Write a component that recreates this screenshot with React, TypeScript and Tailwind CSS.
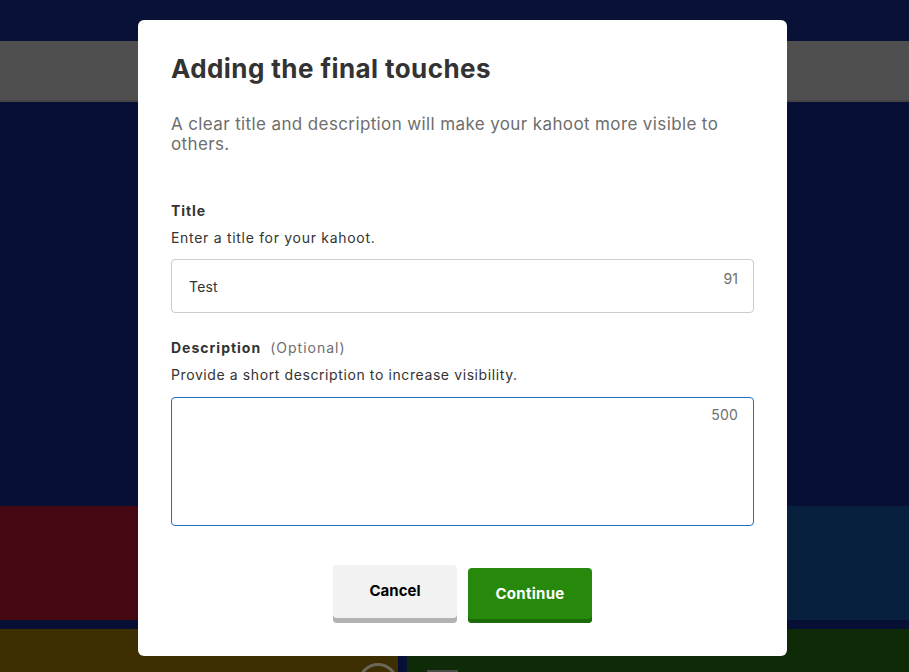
import React from "react";

export default function App() {
  const font = { fontFamily: "Inter, 'Noto Sans', sans-serif" };
  return (
    <div className="relative w-[909px] h-[672px] overflow-hidden bg-[#080f35]" style={font}>
      {/* background page (darkened) */}
      <div className="flex flex-col h-full">
        <div className="h-[41px] bg-[#0a1136]" />
        <div className="h-[61px] bg-[#4f4f4f] border-b-2 border-[#454545]" />
        <div className="flex-1 bg-[#080f35]" />
        <div className="grid grid-cols-[452px_1fr] h-[114px]">
          <div className="bg-[#450813]" />
          <div className="bg-[#06203d]" />
        </div>
        <div className="h-[9px]" />
        <div className="grid grid-cols-[398px_1fr] gap-[9px] h-[43px]">
          <div className="relative bg-[#3d2f02]">
            <div className="absolute left-[358px] top-[34px] w-[40px] h-[40px] rounded-full border-[3px] border-[#6b6658]" />
          </div>
          <div className="relative bg-[#0e2a07]">
            <div className="absolute left-[20px] top-[41px] w-[31px] h-[10px] bg-[#4a4d47]" />
          </div>
        </div>
      </div>

      {/* modal */}
      <div className="absolute left-[138px] top-[20px] w-[649px] h-[636px] bg-white rounded-[6px] px-[33px] pt-[33px] pb-[33px] flex flex-col">
        <h1 className="text-[26px] leading-[32px] font-bold text-[#333333] tracking-[0.42px]">
          Adding the final touches
        </h1>
        <p className="mt-[29px] text-[17px] leading-[20px] text-[#6e6e6e] tracking-[0.38px]">
          A clear title and description will make your kahoot more visible to others.
        </p>

        <div className="mt-[47px] text-[14px] leading-[20px] font-bold text-[#333333] tracking-[0.9px]">Title</div>
        <div className="mt-[7px] text-[14px] leading-[20px] text-[#333333] tracking-[0.7px]">
          Enter a title for your kahoot.
        </div>
        <div className="relative mt-[11px] h-[54px] border border-[#cccccc] rounded-[4px] flex items-center pl-[17px]">
          <span className="text-[14px] text-[#333333] tracking-[0.2px]">Test</span>
          <span className="absolute right-[15px] top-[9px] text-[14px] leading-[20px] text-[#6e6e6e]">91</span>
        </div>

        <div className="mt-[25px] text-[14px] leading-[20px] text-[#333333] flex items-baseline">
          <span className="font-bold tracking-[1px]">Description</span>
          <span className="ml-[9px] text-[#6e6e6e] tracking-[1px]">(Optional)</span>
        </div>
        <div className="mt-[7px] text-[14px] leading-[20px] text-[#333333] tracking-[0.6px]">
          Provide a short description to increase visibility.
        </div>
        <div className="relative mt-[12px] h-[129px] border border-[#2a6bbf] rounded-[4px]">
          <span className="absolute right-[15px] top-[7px] text-[14px] leading-[20px] text-[#6e6e6e] tracking-[0.2px]">
            500
          </span>
        </div>

        <div className="mt-[39px] flex justify-center items-end gap-[11px]">
          <button className="w-[124px] h-[58px] rounded-[4px] bg-[#f2f2f2] shadow-[inset_0_-5px_0_#b3b3b3] pb-[5px] text-[15px] font-bold text-black">
            Cancel
          </button>
          <button className="w-[124px] h-[55px] rounded-[4px] bg-[#26890c] shadow-[inset_0_-4px_0_#1c6a08] pb-[2px] text-[15px] font-bold text-white tracking-[0.3px]">
            Continue
          </button>
        </div>
      </div>
    </div>
  );
}
